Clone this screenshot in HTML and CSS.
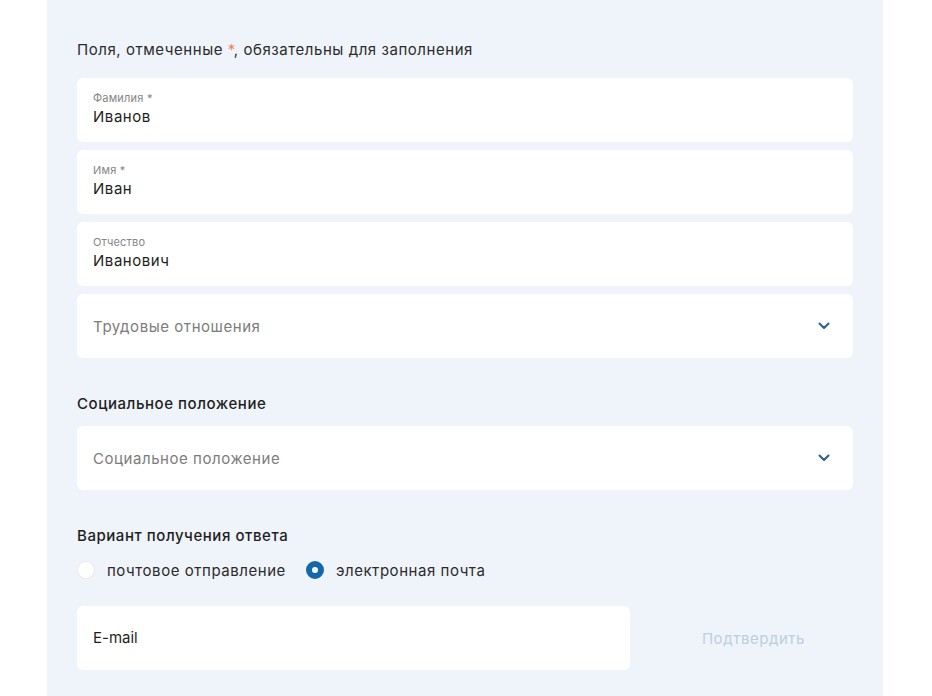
FILE: index.html
```html
<!DOCTYPE html>
<html lang="ru">
<head>
<meta charset="utf-8">
<link rel="stylesheet" href="styles.css">
</head>
<body>
<div class="panel">
  <p class="note">Поля, отмеченные <span class="req">*</span>, обязательны для заполнения</p>
  <div class="fields">
    <div class="field">
      <span class="label">Фамилия *</span>
      <span class="value">Иванов</span>
    </div>
    <div class="field">
      <span class="label">Имя *</span>
      <span class="value">Иван</span>
    </div>
    <div class="field">
      <span class="label">Отчество</span>
      <span class="value">Иванович</span>
    </div>
    <div class="field select">
      <span class="placeholder">Трудовые отношения</span>
      <svg class="chev" width="12" height="8" viewBox="0 0 12 8"><path d="M1.5 1.5 6 6 10.5 1.5" fill="none" stroke="#2a5f8a" stroke-width="2" stroke-linecap="round" stroke-linejoin="round"/></svg>
    </div>
  </div>
  <h3 class="section">Социальное положение</h3>
  <div class="field select">
    <span class="placeholder">Социальное положение</span>
    <svg class="chev" width="12" height="8" viewBox="0 0 12 8"><path d="M1.5 1.5 6 6 10.5 1.5" fill="none" stroke="#2a5f8a" stroke-width="2" stroke-linecap="round" stroke-linejoin="round"/></svg>
  </div>
  <h3 class="section answer">Вариант получения ответа</h3>
  <div class="radios">
    <label class="radio"><span class="dot"></span>почтовое отправление</label>
    <label class="radio on"><span class="dot"></span>электронная почта</label>
  </div>
  <div class="email-row">
    <div class="field email"><span class="value email-text">E-mail</span></div>
    <span class="confirm">Подтвердить</span>
  </div>
</div>
</body>
</html>
```
FILE: styles.css
```css
html, body {
  margin: 0;
  padding: 0;
  background: #ffffff;
}
body {
  font-family: Inter, "Noto Sans", sans-serif;
  color: #222222;
  letter-spacing: 0.55px;
}
.panel {
  margin-left: 47px;
  width: 836px;
  height: 696px;
  box-sizing: border-box;
  background: #eff3fa;
  padding: 40px 30px 0 30px;
}
.note {
  margin: 0 0 18px 0;
  font-size: 15px;
  line-height: 20px;
  color: #2b2b2b;
}
.req { color: #f0825a; }
.fields {
  display: flex;
  flex-direction: column;
  gap: 8px;
}
.field {
  background: #ffffff;
  border-radius: 6px;
  height: 64px;
  box-sizing: border-box;
  padding: 13px 16px 0 16px;
  display: flex;
  flex-direction: column;
  justify-content: flex-start;
  gap: 2px;
}
.label {
  font-size: 11px;
  line-height: 14px;
  color: #858585;
  letter-spacing: 0.2px;
}
.value {
  font-size: 15px;
  line-height: 20px;
  color: #1e1e1e;
}
.select {
  flex-direction: row;
  align-items: center;
  justify-content: space-between;
  padding: 0 23px 0 16px;
}
.placeholder {
  font-size: 15px;
  color: #7c7c7c;
}
.section {
  margin: 36px 0 12px 0;
  font-size: 15px;
  line-height: 20px;
  font-weight: 500;
  color: #1e1e1e;
}
.radios {
  display: flex;
  gap: 20px;
  align-items: center;
  height: 24px;
}
.radio {
  display: flex;
  align-items: center;
  gap: 12px;
  font-size: 15px;
  color: #2b2b2b;
}
.dot {
  width: 18px;
  height: 18px;
  border-radius: 50%;
  background: #ffffff;
  box-sizing: border-box;
  border: 1px solid #e6eaf0;
}
.radio.on .dot {
  background: #ffffff;
  border: 6px solid #1468a8;
}
.email-row {
  margin-top: 24px;
  display: flex;
  align-items: center;
  gap: 24px;
}
.email {
  width: 553px;
  flex: none;
  padding: 0 16px;
  justify-content: center;
}
.email-text {
  letter-spacing: 0;
}
.confirm {
  flex: 1;
  text-align: center;
  font-size: 15px;
  color: #bccfe0;
}
```
